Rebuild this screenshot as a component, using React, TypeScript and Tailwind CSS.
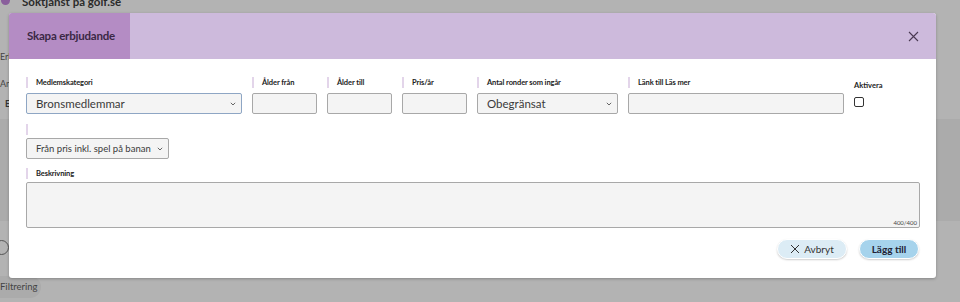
import React from "react";

const font = { fontFamily: 'Lato, "Noto Sans", sans-serif' };

function Label({ text, className = "" }: { text: string; className?: string }) {
  return (
    <div className={`flex h-[11px] items-center whitespace-nowrap border-l-2 border-[#e3d5ea] pl-[8px] text-[7.5px] font-bold leading-none tracking-[-0.1px] text-[#222] ${className}`}>
      {text}
    </div>
  );
}

function Chevron() {
  return (
    <svg width="6" height="4" viewBox="0 0 6 4" className="ml-auto shrink-0">
      <path d="M0.8 0.8 L3 3 L5.2 0.8" fill="none" stroke="#555" strokeWidth="0.9" />
    </svg>
  );
}

function Select({ text, focus = false, size = "text-[11.5px]" }: { text: string; focus?: boolean; size?: string }) {
  return (
    <div
      className={`flex h-[21px] w-full items-center whitespace-nowrap rounded-[2px] border bg-[#f4f4f4] pl-[9px] pr-[5px] text-[#3a3a3a] ${size} ${
        focus ? "border-[#8ea6c4]" : "border-[#a8a8a8]"
      }`}
    >
      <span className="leading-none">{text}</span>
      <Chevron />
    </div>
  );
}

function Input() {
  return <div className="h-[21px] w-full rounded-[2px] border border-[#a8a8a8] bg-[#f4f4f4]" />;
}

export default function App() {
  return (
    <div className="relative h-[302px] w-[960px] overflow-hidden bg-[#b3b3b3]" style={font}>
      {/* background page */}
      <div className="flex flex-col">
        <div className="flex h-[10px] items-start">
          <div className="ml-[1px] mt-[-4px] h-[9px] w-[9px] rounded-full bg-[#8a5f9c]" />
          <div className="ml-[12px] mt-[-7px] whitespace-nowrap text-[11.5px] font-bold text-[#2b2b2b]">Söktjänst på golf.se</div>
        </div>
        <div className="mt-[40px] h-[10px] text-[9px] text-[#444]">Erl</div>
        <div className="mt-[17px] text-[9px] text-[#444]">An</div>
        <div className="mt-[6px] pl-[5px] text-[9px] font-bold text-[#333]">E</div>
        <div className="mt-[9px] h-[102px] bg-[#ababab]" />
        <div className="ml-[-6px] mt-[19px] h-[15px] w-[15px] rounded-full border border-[#555]" />
        <div className="ml-[-10px] mt-[21px] flex h-[22px] w-[51px] items-center rounded-full bg-[#ababab] pl-[10px] text-[9.5px] text-[#444]">
          Filtrering
        </div>
      </div>

      {/* modal */}
      <div className="absolute left-[9px] top-[13px] flex h-[265px] w-[927px] flex-col overflow-hidden rounded-[3px] bg-white shadow-[0_1px_3px_rgba(0,0,0,0.25)]">
        <div className="flex h-[46px] items-stretch bg-[#cdbadc]">
          <div className="flex w-[121px] items-center whitespace-nowrap bg-[#b48cc4] pl-[18px] text-[11.5px] font-bold tracking-[-0.2px] text-[#3a2844]">
            Skapa erbjudande
          </div>
          <div className="flex-1" />
          <div className="flex w-[44px] items-center justify-center pr-[2px]">
            <svg width="11" height="11" viewBox="0 0 11 11">
              <path d="M1 1 L10 10 M10 1 L1 10" stroke="#4a3a52" strokeWidth="1.1" />
            </svg>
          </div>
        </div>

        <div className="flex flex-col px-[17px] pt-[18px]">
          {/* row 1 */}
          <div className="flex gap-[10px]">
            <div className="flex w-[216px] shrink-0 flex-col gap-[5px]">
              <Label text="Medlemskategori" />
              <Select text="Bronsmedlemmar" focus />
            </div>
            <div className="flex w-[65px] shrink-0 flex-col gap-[5px]">
              <Label text="Ålder från" />
              <Input />
            </div>
            <div className="flex w-[65px] shrink-0 flex-col gap-[5px]">
              <Label text="Ålder till" />
              <Input />
            </div>
            <div className="flex w-[65px] shrink-0 flex-col gap-[5px]">
              <Label text="Pris/år" />
              <Input />
            </div>
            <div className="flex w-[141px] shrink-0 flex-col gap-[5px]">
              <Label text="Antal ronder som ingår" />
              <Select text="Obegränsat" />
            </div>
            <div className="flex w-[216px] shrink-0 flex-col gap-[5px]">
              <Label text="Länk till Läs mer" />
              <Input />
            </div>
            <div className="flex flex-col pt-[5px]">
              <div className="text-[7.5px] font-bold leading-none text-[#222]">Aktivera</div>
              <div className="mt-[7px] h-[10px] w-[10px] rounded-[2px] border border-[#333] bg-white" />
            </div>
          </div>

          {/* row 2 */}
          <div className="mt-[10px] flex flex-col gap-[3px]">
            <Label text="" />
            <div className="w-[143px]">
              <Select text="Från pris inkl. spel på banan" size="text-[9.5px]" />
            </div>
          </div>

          {/* beskrivning */}
          <div className="mt-[9px] flex flex-col gap-[3px]">
            <Label text="Beskrivning" />
            <div className="relative h-[46px] w-[894px] rounded-[2px] border border-[#a8a8a8] bg-[#f4f4f4]">
              <span className="absolute bottom-[1px] right-[2px] text-[6px] leading-none text-[#444]">400/400</span>
            </div>
          </div>

          {/* buttons */}
          <div className="mt-[11px] flex w-[894px] justify-end gap-[12px] pr-[1px]">
            <div className="flex h-[20px] w-[70px] items-center justify-center gap-[4px] rounded-full border border-white bg-[#dcecf5] text-[10px] text-[#333] shadow-[0_1px_2px_rgba(0,0,0,0.2)]">
              <svg width="10" height="10" viewBox="0 0 10 10">
                <path d="M1 1 L9 9 M9 1 L1 9" stroke="#333" strokeWidth="1" />
              </svg>
              Avbryt
            </div>
            <div className="flex h-[20px] w-[60px] items-center justify-center rounded-full border border-white bg-[#a6d3ec] text-[10px] font-bold text-[#223] shadow-[0_1px_2px_rgba(0,0,0,0.2)]">
              Lägg till
            </div>
          </div>
        </div>
      </div>
    </div>
  );
}
